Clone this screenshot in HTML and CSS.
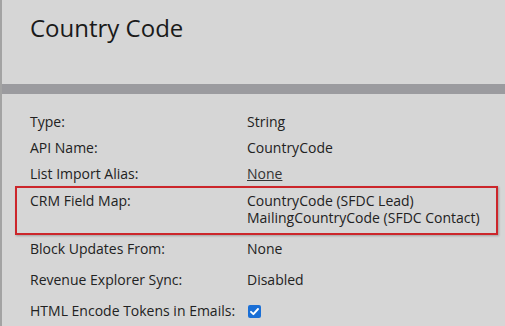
FILE: index.html
```html
<!DOCTYPE html>
<html>
<head>
<meta charset="utf-8">
<link rel="stylesheet" href="styles.css">
</head>
<body>
<div class="panel">
  <header class="head">
    <h1 class="title">Country Code</h1>
  </header>
  <div class="bar"></div>
  <div class="props">
    <div class="row"><div class="label">Type:</div><div class="value">String</div></div>
    <div class="row"><div class="label">API Name:</div><div class="value">CountryCode</div></div>
    <div class="row"><div class="label">List Import Alias:</div><div class="value"><span class="link">None</span></div></div>
    <div class="row row-crm">
      <div class="label">CRM Field Map:</div>
      <div class="value"><div class="line">CountryCode (SFDC Lead)</div><div class="line">MailingCountryCode (SFDC Contact)</div></div>
      <div class="highlight"></div>
    </div>
    <div class="row row-wide"><div class="label">Block Updates From:</div><div class="value">None</div></div>
    <div class="row row-wide"><div class="label">Revenue Explorer Sync:</div><div class="value">Disabled</div></div>
    <div class="row row-wide"><div class="label">HTML Encode Tokens in Emails:</div><div class="value"><span class="check"><svg width="13" height="13" viewBox="0 0 13 13"><rect x="0" y="0" width="13" height="13" rx="2" fill="#1a6fd6"/><path d="M3 6.8 L5.4 9.2 L10 4" fill="none" stroke="#fff" stroke-width="1.9" stroke-linecap="round" stroke-linejoin="round"/></svg></span></div></div>
  </div>
</div>
</body>
</html>
```
FILE: styles.css
```css
html, body {
  margin: 0;
  padding: 0;
  background: #d6d6d6;
}
.panel {
  width: 505px;
  height: 326px;
  overflow: hidden;
  border-left: 2px solid #a3a3a3;
  box-sizing: border-box;
  background: #d6d6d6;
  font-family: "Open Sans", sans-serif;
  color: #222;
}
.head {
  height: 84px;
  padding-left: 28px;
  box-sizing: border-box;
}
.title {
  margin: 0;
  padding-top: 12px;
  font-size: 24px;
  font-weight: 400;
  line-height: 32px;
  color: #1a1a1a;
}
.bar {
  height: 10px;
  background: #9b9b9f;
}
.props {
  padding: 19px 0 0 28px;
  font-size: 14px;
  line-height: 17px;
}
.row {
  display: grid;
  grid-template-columns: 217px 1fr;
  padding-bottom: 9px;
  position: relative;
}
.row-crm {
  margin-top: 1px;
  padding-bottom: 14px;
}
.row-wide {
  padding-bottom: 14px;
}
.label, .value {
  white-space: nowrap;
}
.line {
  height: 17px;
}
.link {
  text-decoration: underline;
  color: #333;
}
.check {
  display: inline-block;
  vertical-align: -2px;
  margin-left: 1px;
}
.check svg {
  display: block;
}
.highlight {
  position: absolute;
  left: -15px;
  top: -6px;
  width: 483px;
  height: 49px;
  border: 2px solid #cc262b;
  box-sizing: border-box;
  box-shadow: 1px 1px 2px rgba(0,0,0,0.25);
}
```
